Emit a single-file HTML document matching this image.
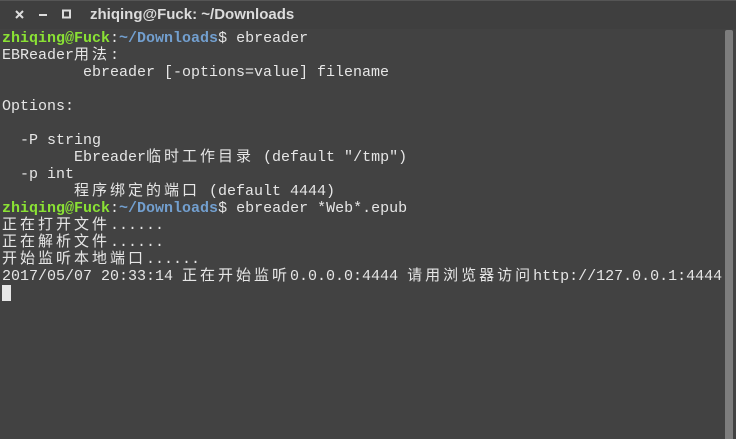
<!DOCTYPE html>
<html><head><meta charset="utf-8"><style>
body{margin:0;width:736px;height:439px;background:#424242;overflow:hidden;position:relative;font-family:"Liberation Mono","Noto Sans CJK SC",monospace;}
#title{position:absolute;left:0;top:0;width:736px;height:28px;background:#3f3f3f;border-top:1px solid #555;}
#title .t{position:absolute;left:90px;top:5px;font:bold 15px "Liberation Sans",sans-serif;color:#dcdcdc;}
#term{position:absolute;left:2px;top:30px;font-size:15px;line-height:17px;color:#e6e6e6;white-space:pre;}
.g{color:#8ae234;font-weight:bold}.b{color:#729fcf;font-weight:bold}
.c{letter-spacing:3px}
#sb{position:absolute;left:725px;top:30px;width:8px;height:409px;background:#7d7d7d;border-radius:2px 2px 0 0}
#cur{display:inline-block;width:9px;height:16px;background:#e6e6e6;vertical-align:-3px}
</style></head><body>
<div id="title">
<svg style="position:absolute;left:14px;top:8px" width="60" height="12"><path d="M2 2L9 9M9 2L2 9" stroke="#ddd" stroke-width="2"/><rect x="25" y="5" width="8" height="2" fill="#ddd"/><rect x="49" y="1.5" width="7" height="7" fill="none" stroke="#ddd" stroke-width="2"/></svg>
<div class="t">zhiqing@Fuck: ~/Downloads</div></div>
<div id="term"><span class="g">zhiqing@Fuck</span>:<span class="b">~/Downloads</span>$ ebreader
EBReader<span class="c">用法</span>:
         ebreader [-options=value] filename

Options:

  -P string
        Ebreader<span class="c">临时工作目录</span> (default "/tmp")
  -p int
        <span class="c">程序绑定的端口</span> (default 4444)
<span class="g">zhiqing@Fuck</span>:<span class="b">~/Downloads</span>$ ebreader *Web*.epub
<span class="c">正在打开文件</span>......
<span class="c">正在解析文件</span>......
<span class="c">开始监听本地端口</span>......
2017/05/07 20:33:14 <span class="c">正在开始监听</span>0.0.0.0:4444 <span class="c">请用浏览器访问</span>http://127.0.0.1:4444
<span id="cur"></span></div>
<div id="sb"></div>
</body></html>
